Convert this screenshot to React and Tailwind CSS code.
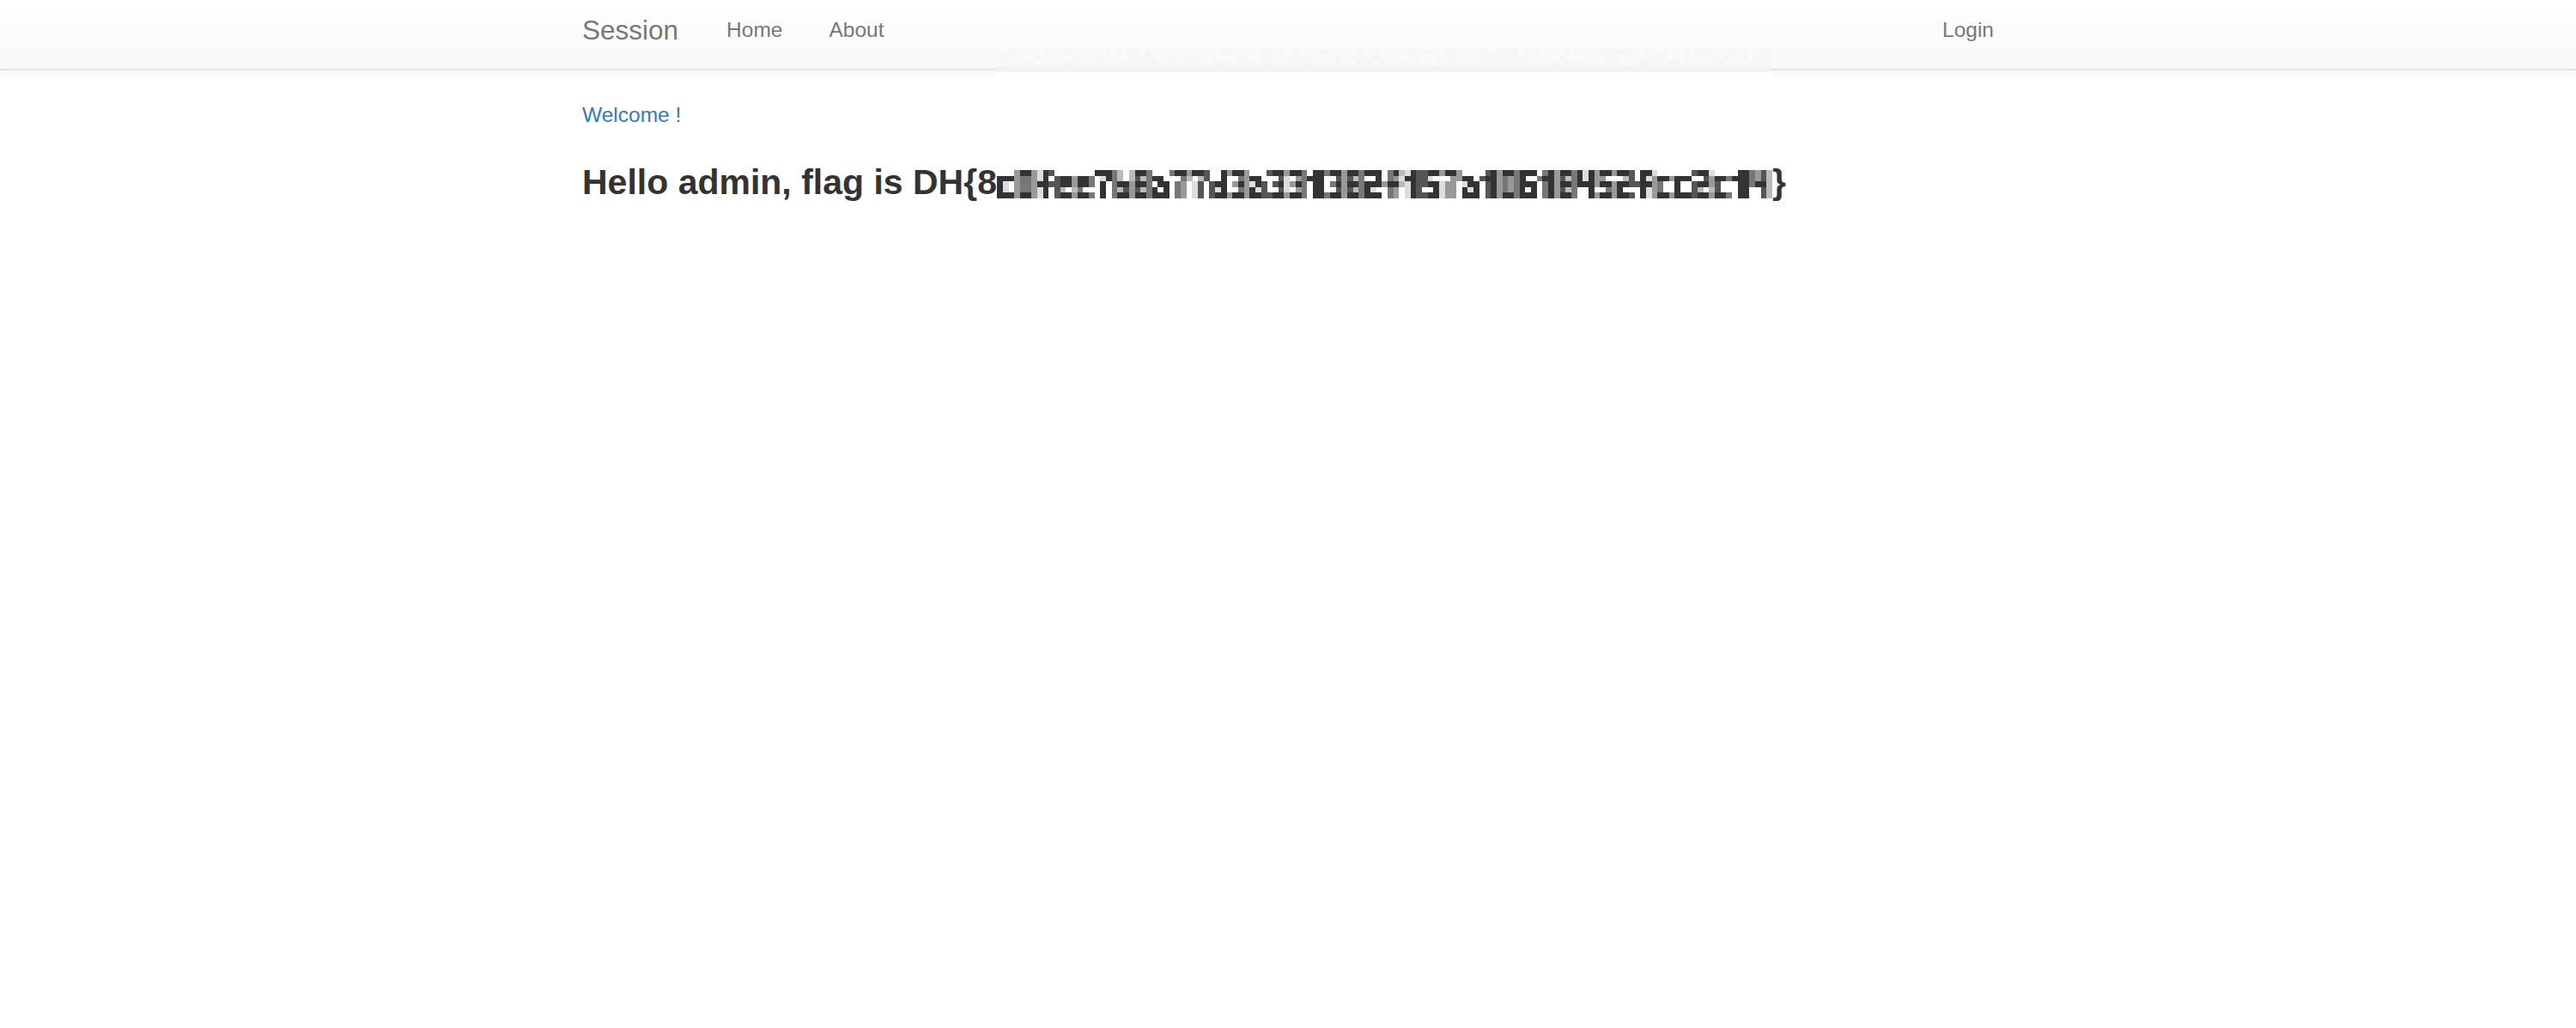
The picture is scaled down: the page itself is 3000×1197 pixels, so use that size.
import React from "react";

function makeRng(seed) {
  let s = seed >>> 0;
  return () => {
    s = (s * 1664525 + 1013904223) >>> 0;
    return s / 4294967296;
  };
}

const COLS = 135;

const GLYPHS = {
  "0": ["111", "101", "101", "101", "111"],
  "1": ["011", "111", "011", "011", "011"],
  "2": ["111", "001", "111", "100", "111"],
  "3": ["111", "001", "011", "001", "111"],
  "4": ["101", "101", "111", "001", "001"],
  "5": ["111", "100", "111", "001", "111"],
  "6": ["111", "100", "111", "101", "111"],
  "7": ["111", "001", "010", "010", "010"],
  "8": ["111", "101", "111", "101", "111"],
  "9": ["111", "101", "111", "001", "111"],
  a: ["000", "110", "011", "101", "111"],
  b: ["100", "100", "111", "101", "111"],
  c: ["000", "111", "100", "100", "111"],
  d: ["001", "001", "111", "101", "111"],
  e: ["000", "111", "111", "100", "111"],
  f: ["011", "010", "111", "010", "010"],
};

function buildCoverage() {
  const rng = makeRng(9137);
  const hex = "0123456789abcdef";
  const cov = Array.from({ length: 5 }, () => new Array(COLS).fill(0));
  const n = 40;
  const charW = 134.6 / n;
  for (let i = 0; i < n; i++) {
    const ch = hex[Math.floor(rng() * 16)];
    const g = GLYPHS[ch];
    const x0 = i * charW + 0.2;
    const colW = 0.95;
    for (let j = 0; j < 3; j++) {
      const a = x0 + j * colW;
      const b = a + colW;
      for (let c = Math.floor(a); c < Math.ceil(b) && c < COLS; c++) {
        const ov = Math.max(0, Math.min(b, c + 1) - Math.max(a, c));
        for (let r = 0; r < 5; r++) {
          if (g[r][j] === "1") cov[r][c] += ov;
        }
      }
    }
  }
  return cov;
}

function FlagMosaic() {
  const cov = buildCoverage();
  const rects = [];
  for (let r = 0; r < 5; r++) {
    for (let c = 0; c < COLS; c++) {
      const v = Math.min(1, cov[r][c]);
      if (v < 0.04) continue;
      const q = Math.round(Math.min(1, v * 1.15) * 6) / 6;
      const lvl = Math.round(255 - q * (255 - 51));
      const hx = lvl.toString(16).padStart(2, "0");
      rects.push(
        <rect key={r + "-" + c} x={c} y={r} width={1.02} height={1.02} fill={`#${hx}${hx}${hx}`} />
      );
    }
  }
  return (
    <svg
      width="903"
      height="33"
      viewBox={`0 0 ${COLS} 5`}
      preserveAspectRatio="none"
      shapeRendering="crispEdges"
      className="inline-block"
    >
      <rect x="0" y="0" width={COLS} height="5" fill="#ffffff" />
      {rects}
    </svg>
  );
}

function NavMosaic() {
  const rng = makeRng(777);
  const shades = ["#f6f6f6", "#f7f7f7", "#f8f8f8", "#f9f9f9", "#fafafa"];
  const rects = [];
  for (let c = 0; c < COLS; c++) {
    for (let r = 0; r < 3; r++) {
      const fill = shades[Math.floor(rng() * shades.length)];
      rects.push(<rect key={c + "-" + r} x={c} y={r} width={1.02} height={1.02} fill={fill} />);
    }
  }
  return (
    <svg
      width="903"
      height="40"
      viewBox={`0 0 ${COLS} 6`}
      preserveAspectRatio="none"
      shapeRendering="crispEdges"
      className="absolute left-[481px] top-[57px] block"
    >
      <rect x="0" y="0" width={COLS} height="3" fill="#f8f8f8" />
      {rects}
      <rect x="0" y="3" width={COLS} height="1" fill="#f4f4f4" />
      <rect x="0" y="4" width={COLS} height="2" fill="#ffffff" />
    </svg>
  );
}

export default function App() {
  return (
    <div
      className="min-h-[1197px] w-full bg-white"
      style={{ fontFamily: '"Liberation Sans", Arial, Helvetica, sans-serif' }}
    >
      <nav className="h-[82px] w-full border-b-2 border-[#e4e4e4] bg-gradient-to-b from-white to-[#f8f8f8] shadow-[0_2px_10px_rgba(0,0,0,0.06)]">
        <div className="relative mx-auto flex h-full w-[1644px] items-start">
          <span className="mt-[20px] text-[31.5px] leading-none text-[#777777]">Session</span>
          <span className="ml-[56px] mt-[23px] text-[24.5px] leading-none text-[#777777]">Home</span>
          <span className="ml-[54px] mt-[23px] text-[24.5px] leading-none text-[#777777]">About</span>
          <span className="ml-auto mt-[23px] text-[24.5px] leading-none text-[#777777]">Login</span>
          <NavMosaic />
        </div>
      </nav>
      <main className="mx-auto w-[1644px]">
        <p className="mt-[40px] text-[24.5px] leading-none text-[#337ab7]">Welcome !</p>
        <h3 className="mt-[45px] whitespace-nowrap text-[41px] font-bold leading-none text-[#333333]">
          Hello admin, flag is DH{"{"}8<FlagMosaic />{"}"}
        </h3>
      </main>
    </div>
  );
}
